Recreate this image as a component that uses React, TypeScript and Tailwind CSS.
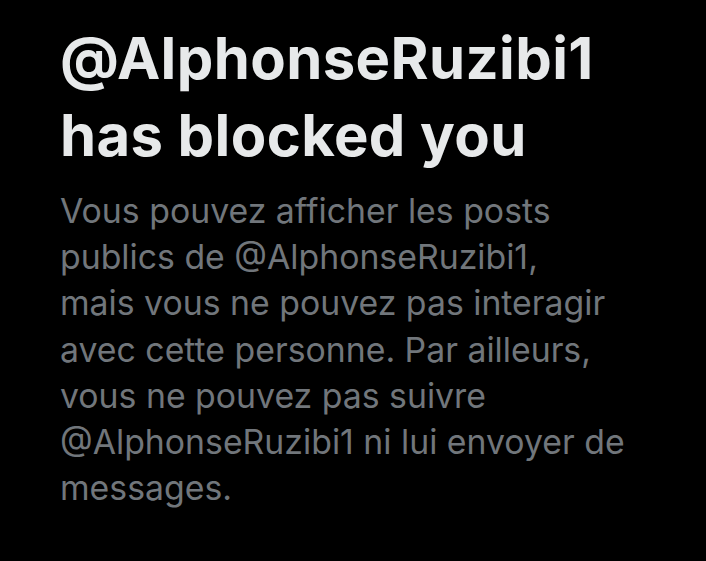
import React from "react";

const handle = "@AlphonseRuzibi1";

const App = () => {
  return (
    <div className="min-h-[561px] w-full bg-black px-[60px] pt-[20px] font-['Inter',sans-serif]">
      {/* title */}
      <h1 className="text-[58px] font-bold leading-[77px] text-[#e7e9ea] tracking-[0.4px]">
        {handle}
        <br />
        has blocked you
      </h1>

      {/* description */}
      <p className="mt-[14px] text-[33.8px] leading-[46.2px] text-[#71767b]">
        Vous pouvez afficher les posts
        <br />
        publics de {handle},
        <br />
        mais vous ne pouvez pas interagir
        <br />
        avec cette personne. Par ailleurs,
        <br />
        vous ne pouvez pas suivre
        <br />
        {handle} ni lui envoyer de
        <br />
        messages.
      </p>
    </div>
  );
};

export default App;
